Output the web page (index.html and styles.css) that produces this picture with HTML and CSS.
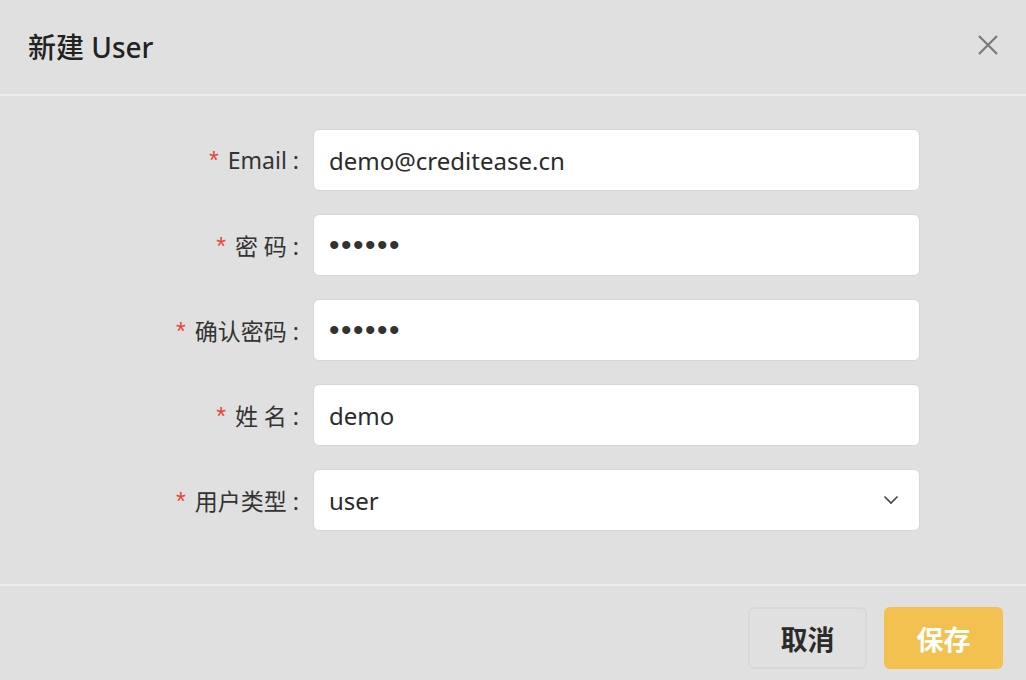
FILE: index.html
```html
<!DOCTYPE html>
<html lang="zh">
<head>
<meta charset="utf-8">
<link rel="stylesheet" href="styles.css">
</head>
<body>
<div class="modal">
  <div class="header">
    <div class="title">新建 User</div>
    <svg class="close" width="20" height="20" viewBox="0 0 20 20"><path d="M1 1 L19 19 M19 1 L1 19" stroke="#7a7a7a" stroke-width="2.2" fill="none"/></svg>
  </div>
  <div class="body">
    <div class="row"><label class="label"><span class="req">*</span>Email :</label><div class="input">demo@creditease.cn</div></div>
    <div class="row"><label class="label"><span class="req">*</span>密 码 :</label><div class="input dots">••••••</div></div>
    <div class="row"><label class="label"><span class="req">*</span>确认密码 :</label><div class="input dots">••••••</div></div>
    <div class="row"><label class="label"><span class="req">*</span>姓 名 :</label><div class="input">demo</div></div>
    <div class="row"><label class="label"><span class="req">*</span>用户类型 :</label><div class="input select"><span>user</span><svg width="16" height="10" viewBox="0 0 16 10"><path d="M1.5 1.5 L8 8 L14.5 1.5" stroke="#444" stroke-width="1.6" fill="none"/></svg></div></div>
  </div>
  <div class="footer">
    <button class="btn cancel">取消</button>
    <button class="btn save">保存</button>
  </div>
</div>
</body>
</html>
```
FILE: styles.css
```css
html, body {
  margin: 0;
  padding: 0;
  background: #e0e0e0;
  font-family: "Noto Sans", "Noto Sans CJK SC", sans-serif;
  color: #2b2b2b;
}
.modal {
  width: 1026px;
  height: 680px;
  overflow: hidden;
}
.header {
  height: 94px;
  border-bottom: 2px solid #ebebeb;
  display: flex;
  align-items: center;
  justify-content: space-between;
  padding: 0 28px 0 28px;
}
.title {
  font-size: 28px;
  font-weight: 500;
  color: #222;
  margin-top: -2px;
}
.close {
  margin-top: -4px;
}
.body {
  padding: 33px 0 53px 0;
  display: flex;
  flex-direction: column;
  gap: 23px;
  border-bottom: 2px solid #ebebeb;
}
.row {
  display: flex;
  align-items: center;
}
.label {
  width: 313px;
  text-align: right;
  font-size: 23px;
  color: #333;
  padding-right: 14px;
  box-sizing: border-box;
}
.req {
  color: #e8453c;
  font-size: 25px;
  margin-right: 9px;
  font-family: "Liberation Sans", sans-serif;
}
.input {
  width: 607px;
  height: 62px;
  box-sizing: border-box;
  background: #fff;
  border: 1px solid #d6d6d6;
  border-radius: 6px;
  padding: 0 15px;
  display: flex;
  align-items: center;
  font-size: 24px;
  color: #2b2b2b;
}
.dots {
  font-family: "Liberation Sans", sans-serif;
  font-size: 30px;
  letter-spacing: 1.5px;
  color: #333;
}
.select {
  justify-content: space-between;
  padding-right: 20px;
}
.footer {
  display: flex;
  justify-content: flex-end;
  gap: 17px;
  padding: 21px 23px 0 0;
}
.btn {
  height: 62px;
  width: 119px;
  border-radius: 6px;
  font-family: "Noto Sans CJK SC", sans-serif;
  font-size: 27px;
  font-weight: 700;
  box-sizing: border-box;
}
.cancel {
  background: #e0e0e0;
  border: 2px solid #d8d8d8;
  color: #2b2b2b;
}
.save {
  background: #f3c150;
  border: none;
  color: #fff;
}
```
